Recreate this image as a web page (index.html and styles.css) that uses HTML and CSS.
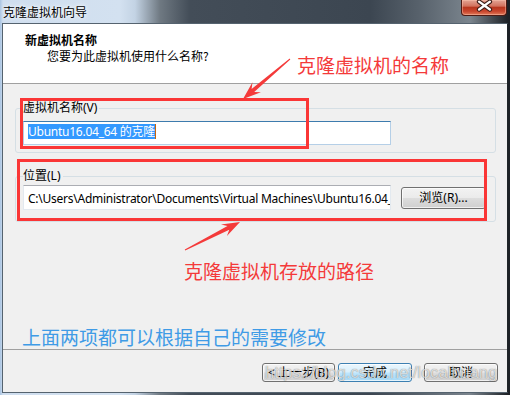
FILE: index.html
```html
<!DOCTYPE html>
<html lang="zh-CN">
<head>
<meta charset="utf-8">
<title>克隆虚拟机向导</title>
<link rel="stylesheet" href="styles.css">
</head>
<body>
<div class="window">
  <div class="titlebar">
    <span class="title">克隆虚拟机向导</span>
    <span class="close">
      <svg width="46" height="16" viewBox="0 0 46 16">
        <path d="M18.5 2.5 L29.5 10.5 M29.5 2.5 L18.5 10.5" stroke="#3b1c17" stroke-width="4.6" stroke-linecap="round" fill="none"/>
        <path d="M18.5 2.5 L29.5 10.5 M29.5 2.5 L18.5 10.5" stroke="#ffffff" stroke-width="2.4" stroke-linecap="round" fill="none"/>
      </svg>
    </span>
  </div>
  <div class="client">
    <div class="header">
      <div class="h-title">新虚拟机名称</div>
      <div class="h-sub">您要为此虚拟机使用什么名称?</div>
    </div>
    <div class="main">
      <fieldset class="group group-name">
        <legend>虚拟机名称(V)</legend>
        <div class="textbox focused"><span class="sel">Ubuntu16.04_64 的克隆</span><span class="caret"></span></div>
      </fieldset>
      <fieldset class="group group-loc">
        <legend>位置(L)</legend>
        <div class="row">
          <div class="textbox"><span class="path">C:\Users\Administrator\Documents\Virtual Machines\Ubuntu16.04_64 的克隆</span></div>
          <button class="btn browse">浏览(R)...</button>
        </div>
      </fieldset>
      <div class="note-red">克隆虚拟机存放的路径</div>
      <div class="note-blue">上面两项都可以根据自己的需要修改</div>
    </div>
    <div class="footer">
      <button class="btn back">&lt; 上一步(B)</button>
      <button class="btn default">完成</button>
      <button class="btn cancel">取消</button>
    </div>
  </div>

  <div class="anno-rect rect-name"></div>
  <div class="anno-rect rect-loc"></div>
  <div class="anno-text1">克隆虚拟机的名称</div>
  <svg class="arrows" width="510" height="395" viewBox="0 0 510 395">
    <polygon fill="#f43a3a" points="243,99 260.9,92.3 254.2,92.1 290.3,59.4 289.7,58.6 251.6,89.1 252.5,82.3"/>
    <polygon fill="#f43a3a" points="240,222 226.9,236 229.3,229.7 185.2,250.4 184.8,249.6 227.5,226.1 221,224.4"/>
  </svg>
  <div class="watermark">https://blog.csdn.net/localhuang</div>
</div>
</body>
</html>
```

FILE: styles.css
```css
* { box-sizing: border-box; }
html, body { margin: 0; padding: 0; }
body {
  width: 510px;
  height: 395px;
  overflow: hidden;
  font-family: "Noto Sans", "Noto Sans CJK SC", sans-serif;
  font-size: 12px;
  color: #000;
}
.window {
  position: relative;
  width: 510px;
  height: 395px;
  padding: 0 2px 0 2px;
  display: flex;
  flex-direction: column;
  background: linear-gradient(90deg, #a9c4e2 0px, #cfdeef 3px, #d3e1f0 120px, #c3d3e4 135px, #6f7982 160px, #434d58 190px, #3c4651 370px, #58626c 420px, #7b858e 470px, #1d2126 508px);
}
.titlebar {
  height: 23px;
  display: flex;
  align-items: flex-start;
}
.title {
  padding: 4px 0 0 1px;
  line-height: 16px;
  font-family: "Noto Sans CJK SC", sans-serif;
  text-shadow: 0 0 6px rgba(255,255,255,0.95), 0 0 3px rgba(255,255,255,0.9);
}
.close {
  margin-left: auto;
  margin-right: 1px;
  width: 46px;
  height: 16px;
  border: 1px solid #4e1a13;
  border-top: none;
  border-radius: 0 0 4px 4px;
  background: linear-gradient(#e3a494 0%, #d2735f 40%, #b8371f 50%, #c9452d 75%, #e07a5a 100%);
  box-shadow: inset 0 0 0 1px rgba(255,200,180,0.45);
  display: flex;
}
.close svg { display: block; margin: -1px 0 0 -1px; }

.client {
  width: 506px;
  height: 370px;
  border: 1px solid #55636f;
  border-right-color: #1f2428;
  background: #f0f0f0;
  display: flex;
  flex-direction: column;
}
.header {
  height: 60px;
  flex: none;
  background: #fff;
  border-bottom: 1px solid #a0a0a0;
  padding: 8px 0 0 22px;
  line-height: 16px;
}
.h-title { font-weight: bold; font-family: "Noto Sans CJK SC", sans-serif; }
.h-sub { padding-left: 22px; font-family: "Noto Sans CJK SC", sans-serif; }

.main {
  height: 266px;
  flex: none;
  border-bottom: 1px solid #a0a0a0;
  padding-top: 16px;
}
.group {
  margin: 0 11px 0 12px;
  border: 1px solid #d5dfe5;
  border-radius: 3px;
  padding: 0 7px 7px 7px;
  min-width: 0;
}
.group legend {
  padding: 0 2px 0 0;
  line-height: 16px;
  font-family: "Noto Sans", "Noto Sans CJK SC", sans-serif;
}
.group-name { padding-top: 5px; }
.group-loc { margin-top: 15px; padding-top: 1px; padding-bottom: 11px; }

.textbox {
  width: 368px;
  height: 24px;
  border: 1px solid #e3e9ef;
  border-top-color: #abadb3;
  background: #fff;
  padding-left: 4px;
  display: flex;
  align-items: center;
  overflow: hidden;
  white-space: nowrap;
  letter-spacing: -0.25px;
}
.textbox.focused {
  border-color: #b5cfe7;
  border-top-color: #3d7bad;
}
.sel {
  background: #3399ff;
  color: #fff;
  line-height: 15px;
  height: 15px;
  margin-top: -3px;
}
.caret {
  width: 1px;
  height: 15px;
  margin-top: -3px;
  background: #c7650a;
}
.path { color: #000; }
.row {
  display: flex;
  align-items: center;
  gap: 10px;
}
.group-loc .textbox { height: 25px; width: 368px; }

.btn {
  height: 22px;
  padding: 0;
  border: 1px solid #707070;
  border-radius: 3px;
  background: linear-gradient(#f2f2f2 0%, #ebebeb 48%, #dddddd 52%, #cfcfcf 100%);
  box-shadow: inset 0 0 0 1px rgba(255,255,255,0.7);
  font-family: "Noto Sans", "Noto Sans CJK SC", sans-serif;
  font-size: 12px;
  line-height: 16px;
  color: #000;
}
.browse { width: 85px; }

.note-red {
  margin: 38px 0 0 181px;
  font-family: "Noto Sans CJK SC", sans-serif;
  font-size: 19px;
  line-height: 22px;
  color: #f43a3a;
}
.note-blue {
  margin: 44px 0 0 19px;
  font-family: "Noto Sans CJK SC", sans-serif;
  font-size: 19px;
  line-height: 22px;
  color: #3f9be6;
}

.footer {
  flex: none;
  height: 42px;
  display: flex;
  justify-content: flex-end;
  align-items: flex-start;
  padding: 13px 9px 0 0;
}
.footer .btn { height: 19px; width: 74px; }
.footer .back { width: 73px; margin-right: 3px; }
.footer .default {
  border-color: #3c7fb1;
  background: linear-gradient(#eaf6fd 0%, #d9f0fc 48%, #bee6fd 52%, #a7d9f5 100%);
  margin-right: 12px;
}

.anno-rect {
  position: absolute;
  border: 3px solid #fa3636;
}
.rect-name { left: 20px; top: 98px; width: 289px; height: 51px; }
.rect-loc { left: 17px; top: 159px; width: 470px; height: 62px; }
.anno-text1 {
  position: absolute;
  left: 297px;
  top: 54px;
  font-family: "Noto Sans CJK SC", sans-serif;
  font-size: 19px;
  line-height: 22px;
  color: #f43a3a;
}
.arrows {
  position: absolute;
  left: 0;
  top: 0;
  pointer-events: none;
}
.watermark {
  position: absolute;
  left: 265px;
  top: 362px;
  font-family: "Liberation Sans", sans-serif;
  font-size: 16.5px;
  line-height: 20px;
  color: rgba(255,255,255,0.72);
  text-shadow: 0 0 1px rgba(0,0,0,0.55);
  pointer-events: none;
}
```
